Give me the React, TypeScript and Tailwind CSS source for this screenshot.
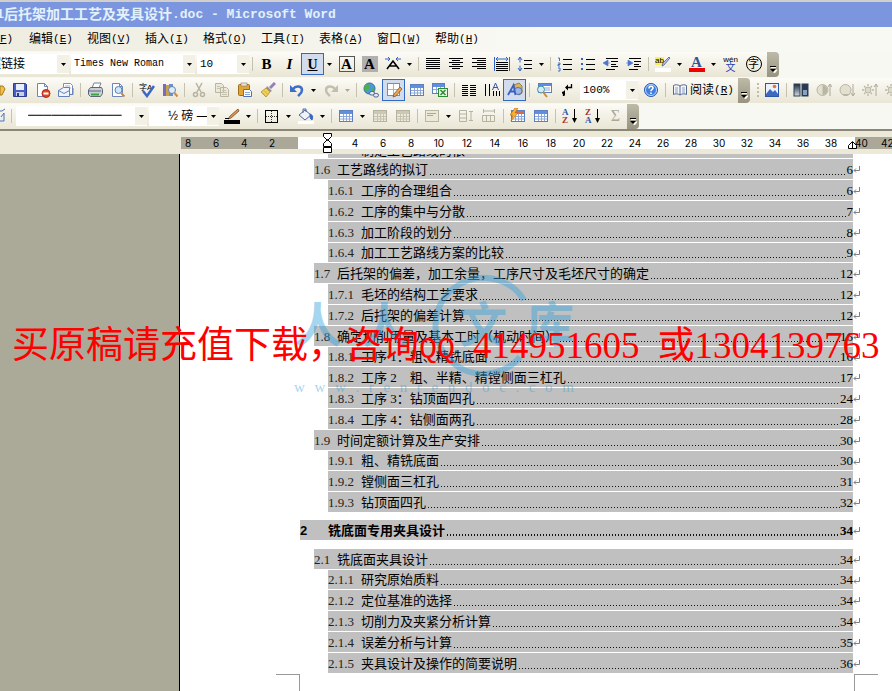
import type { ReactNode } from 'react';

const CJK = 'font-["Liberation_Sans","Noto_Sans_CJK_SC",sans-serif]';
const MONO = 'font-["Liberation_Mono","Noto_Sans_CJK_SC",monospace]';
const SERIF = 'font-["Liberation_Serif","Noto_Sans_CJK_SC",serif]';

function Svg({ children, w = 16 }: { children: ReactNode; w?: number }) {
  return (
    <svg width={w} height="16" viewBox={`0 0 ${w} 16`} fill="none" className="shrink-0" aria-hidden="true">
      {children}
    </svg>
  );
}

function Btn({ label, on, children }: { label: string; on?: boolean; children: ReactNode }) {
  return (
    <button
      type="button"
      aria-label={label}
      className={`flex h-[22px] w-[23px] shrink-0 items-center justify-center ${on ? 'border border-[#316ac5] bg-[#d3dcec]' : ''}`}
    >
      {children}
    </button>
  );
}

function Arrow({ dim }: { dim?: boolean }) {
  return (
    <button type="button" aria-label="更多选项" className="flex h-[22px] w-[11px] shrink-0 items-center justify-center">
      <svg width="5" height="3" viewBox="0 0 5 3" aria-hidden="true">
        <path d="M0 0h5L2.5 3z" fill={dim ? '#aca899' : '#000'} />
      </svg>
    </button>
  );
}

function Sep() {
  return (
    <span className="flex h-[22px] w-[6px] shrink-0 items-center justify-center">
      <span className="h-[14px] w-px bg-[#c5c2b0]" />
    </span>
  );
}

function Cap() {
  return (
    <button
      type="button"
      aria-label="工具栏选项"
      className="flex h-[25px] w-3 shrink-0 items-end justify-center rounded-r-sm bg-linear-to-b from-[#bdbaa9] to-[#98947f] pb-1"
    >
      <svg width="7" height="7" viewBox="0 0 7 7" aria-hidden="true">
        <path d="M1 1.5h5M2 4h5L4.5 7z" stroke="#fff" fill="#fff" />
        <path d="M0 .5h6" stroke="#000" />
        <path d="M0 3h6L3 6z" fill="#000" />
      </svg>
    </button>
  );
}

function Combo({ label, value, box, text }: { label: string; value: string; box: string; text: string }) {
  return (
    <div className={`flex h-[20px] shrink-0 items-center overflow-hidden bg-white ${box}`}>
      <select aria-label={label} className={`min-w-0 flex-1 appearance-none bg-white leading-4 text-black ${text}`}>
        <option>{value}</option>
      </select>
      <span className="flex h-[18px] w-[12px] items-center justify-center bg-[#f3f1e6]">
        <svg width="5" height="3" viewBox="0 0 5 3" aria-hidden="true">
          <path d="M0 0h5L2.5 3z" fill="#000" />
        </svg>
      </span>
    </div>
  );
}

function Bar({ children }: { children: ReactNode }) {
  return (
    <div className="flex h-[25px] shrink-0 items-center rounded-r-sm bg-linear-to-b from-[#fcfbf6] to-[#e9e6d5]">
      {children}
    </div>
  );
}

/* ---------- icons ---------- */

function Lines({ rows }: { rows: [number, number][] }) {
  return (
    <Svg>
      <path d={rows.map(([a, b], i) => `M${a} ${2.5 + i * 2}H${b}`).join('')} stroke="#000" />
    </Svg>
  );
}

function TableIcon({ dim, lightning }: { dim?: boolean; lightning?: boolean }) {
  const s = dim ? '#b5b2a0' : '#5b7fc0';
  return (
    <Svg>
      <rect x="1.5" y="2.5" width="13" height="11" fill={dim ? '#ece9d8' : '#fff'} stroke={s} />
      <rect x="2" y="3" width="12" height="3" fill={dim ? '#cbc8b6' : lightning ? '#d9694a' : '#5f8fe0'} />
      <path d="M2 8.5h12M2 11h12M5.5 6v7M8.5 6v7M11.5 6v7" stroke={dim ? '#c5c2b0' : '#8fa8d8'} />
      {lightning && <path d="M5 0L0 7h3l-2 6 7-8H5l3-5z" fill="#f5b62a" stroke="#c2611a" strokeWidth=".6" />}
    </Svg>
  );
}

function Page({ children }: { children?: ReactNode }) {
  return (
    <Svg>
      <path d="M2.5 1.5h7l3 3v10h-10z" fill="#fff" stroke="#6f87b8" />
      <path d="M9.5 1.5v3h3" stroke="#6f87b8" />
      {children}
    </Svg>
  );
}

const Save = (
  <Svg>
    <path d="M1.5 1.5h12l1 1v12h-13z" fill="#4a5fc4" stroke="#2c3c92" />
    <rect x="4" y="2" width="8" height="6" fill="#e8eefc" />
    <rect x="4" y="10" width="8" height="4" fill="#c8cfe6" />
    <rect x="5" y="11" width="2" height="3" fill="#2c3c92" />
  </Svg>
);
const Permission = (
  <Page>
    <circle cx="11" cy="11.5" r="4" fill="#e0442a" stroke="#b32a15" />
    <rect x="8.5" y="10.5" width="5" height="2" fill="#fff" />
  </Page>
);
const Mail = (
  <Svg>
    <path d="M5.5 5V1.5h7l2 2V12" fill="#fff" stroke="#7a8fc0" />
    <path d="M7 4h5M7 6h6" stroke="#9fb2dc" />
    <path d="M.5 8.5l5-3h6v9H.5z" fill="#eef3fc" stroke="#6580b8" />
    <path d="M.5 8.5l5.5 3 5.5-3" stroke="#6580b8" />
    <path d="M12 12.5h3V6" stroke="#6580b8" />
  </Svg>
);
const Print = (
  <Svg>
    <path d="M5 6l2-5h7l-2 5z" fill="#fff" stroke="#7a8290" />
    <path d="M1.5 8l2-2.5h11l1 2v4l-2 3h-10l-2-2z" fill="#c9cfd8" stroke="#5d6675" />
    <path d="M2 9h12" stroke="#5d6675" />
    <path d="M4 12.5h8" stroke="#39a83e" strokeWidth="2" />
  </Svg>
);
const Preview = (
  <Page>
    <circle cx="8.5" cy="8" r="3.5" fill="#cfe6fa" stroke="#5f7fae" />
    <path d="M11 11l3.5 3.5" stroke="#d8892f" strokeWidth="2" />
  </Page>
);
const Spell = (
  <Svg>
    <text x="0" y="8" fontSize="8" fill="#000" className={CJK}>字A</text>
    <path d="M4 9l4 5 7-10" stroke="#3b68c8" strokeWidth="2.5" />
  </Svg>
);
const Research = (
  <Svg>
    <rect x="1" y="2" width="3" height="12" fill="#7a6bc0" />
    <rect x="4" y="3" width="3" height="11" fill="#c9a24a" />
    <rect x="7" y="2" width="4" height="12" fill="#6b90cf" />
    <circle cx="10" cy="8" r="3.5" fill="#dcecfb" stroke="#6681ae" />
    <path d="M12.5 11l3 3.5" stroke="#d8892f" strokeWidth="2" />
  </Svg>
);
const Cut = (
  <Svg>
    <path d="M5 1l5 9M11 1L6 10" stroke="#b5b2a0" strokeWidth="1.5" />
    <circle cx="4.5" cy="12.5" r="2" stroke="#b5b2a0" strokeWidth="1.5" />
    <circle cx="11.5" cy="12.5" r="2" stroke="#b5b2a0" strokeWidth="1.5" />
  </Svg>
);
const Copy = (
  <Svg>
    <path d="M1.5 1.5h6l2 2v7h-8zM6.5 5.5h6l2 2v7h-8z" fill="#ece9d8" stroke="#b9b6a4" />
    <path d="M8 8.5h4M8 10.5h5M8 12.5h5M3 4.5h3M3 6.5h3" stroke="#c5c2b0" />
  </Svg>
);
const Paste = (
  <Svg>
    <rect x="1.5" y="2.5" width="11" height="11" rx="1" fill="#e3a535" stroke="#a06d1a" />
    <rect x="4" y="1" width="6" height="3" fill="#e8e4d4" stroke="#847c68" strokeWidth=".6" />
    <path d="M6.5 7.5h6l2 2v5h-8z" fill="#fff" stroke="#5572b0" />
    <path d="M8 10.5h5M8 12.5h5" stroke="#8ba4d6" />
  </Svg>
);
const Brush = (
  <Svg>
    <path d="M15 1l-5 5" stroke="#9a7fb8" strokeWidth="3" />
    <path d="M7 4l5 5-2 1-4-4z" fill="#8f8fa8" />
    <path d="M6 6l4 4-4 5-5-5z" fill="#f0d25a" stroke="#b08d22" strokeWidth=".8" />
    <path d="M2 10.5l3 3M4 8.5l4 4" stroke="#c9a230" strokeWidth=".8" />
  </Svg>
);
function Turn({ dim }: { dim?: boolean }) {
  return (
    <Svg>
      <g transform={dim ? 'translate(16 0) scale(-1 1)' : undefined}>
        <path d="M4 7c3-4 9-3 9 1 0 3-2 4-4 6" stroke={dim ? '#c2bfae' : '#3d6cc9'} strokeWidth="2.5" />
        <path d="M1 3v7h7z" fill={dim ? '#c2bfae' : '#3d6cc9'} />
      </g>
    </Svg>
  );
}
const Globe = (
  <Svg>
    <circle cx="6.5" cy="6.5" r="5.5" fill="#4a9bd8" stroke="#2b6a9c" />
    <path d="M2 3c4-2 6 1 4 4S2 9 1 6zM8 7c3-2 4 0 3 2l-3 2z" fill="#4fb04a" />
    <rect x="6.5" y="9.5" width="5" height="3.5" rx="1.7" fill="#e4e9f4" stroke="#52648c" />
    <rect x="10.5" y="11.5" width="5" height="3.5" rx="1.7" fill="#e4e9f4" stroke="#52648c" />
  </Svg>
);
const DrawTable = (
  <Svg>
    <rect x="1.5" y="1.5" width="12" height="12" fill="#fff" stroke="#6d8cc8" />
    <path d="M7.5 2v11M2 7.5h11" stroke="#9db4e0" />
    <path d="M14 5l-6 7-1 3 3-1 6-7z" fill="#e9a353" stroke="#8a5420" strokeWidth=".8" />
  </Svg>
);
const Excel = (
  <Svg>
    <rect x=".5" y="1.5" width="12" height="10" fill="#fff" stroke="#5b7fc0" />
    <rect x="1" y="2" width="11" height="3" fill="#5f8fe0" />
    <path d="M1 7.5h11M4.5 5v6M8.5 5v6" stroke="#8fa8d8" />
    <rect x="6.5" y="6.5" width="9" height="8" fill="#e8f6e4" stroke="#2d8a34" />
    <path d="M8.5 8l5 5M13.5 8l-5 5" stroke="#2d8a34" strokeWidth="1.5" />
  </Svg>
);
const Columns = (
  <Svg>
    <path d="M1 3.5h6M1 5.5h6M1 7.5h6M1 9.5h6M1 11.5h6M1 13.5h6M9 3.5h6M9 5.5h6M9 7.5h6M9 9.5h6M9 11.5h6M9 13.5h6" stroke="#000" />
  </Svg>
);
const Direction = (
  <Svg>
    <path d="M1.5 2v12M5.5 2v12M9.5 9v5M12.5 9v5M15.5 9v5" stroke="#000" />
    <path d="M8.5 8l3-7 3 7M9.5 5.5h4" stroke="#3059b5" />
  </Svg>
);
const Drawing = (
  <Svg>
    <path d="M7 3l5-2 3 3v7l-3 2-4-3z" fill="#d8b65c" stroke="#8c6c24" strokeWidth=".8" />
    <ellipse cx="11" cy="9" rx="4" ry="3.5" fill="#9eb8ea" stroke="#3f5fa8" strokeWidth=".8" />
    <path d="M1 13L6.500 3l2 10M3.500 9.500h5" stroke="#3d5fc0" strokeWidth="1.8" />
  </Svg>
);
const DocMap = (
  <Svg>
    <rect x="2.5" y="1.5" width="13" height="9" fill="#fff" stroke="#5b7fc0" />
    <rect x="3" y="2" width="12" height="2" fill="#5f8fe0" />
    <path d="M9 6h5M9 8h5" stroke="#8fa8d8" />
    <circle cx="5" cy="7.5" r="3.5" fill="#d3ecf4" stroke="#3a8ca0" />
    <path d="M7 10l4 5" stroke="#c98a3a" strokeWidth="2" />
  </Svg>
);
const Marks = (
  <Svg>
    <path d="M12.5 2v3.500H9M4.500 14v-3.500H3" stroke="#000" strokeWidth="1.300" />
    <path d="M9 2.500v6L6 5.500zM6 8v6l-3-3z" fill="#000" />
  </Svg>
);
const Help = (
  <Svg>
    <circle cx="8" cy="8" r="6.5" fill="#3f7fe0" stroke="#2458b0" />
    <circle cx="8" cy="8" r="5.5" stroke="#bcd6fb" />
    <path d="M6 6.5c0-3 4-3 4-.5C10 7.500 8 7.500 8 9.300M8 10.500v1.500" stroke="#fff" strokeWidth="1.6" />
  </Svg>
);
const Book = (
  <Svg>
    <path d="M8 4C6 2.500 3 2.500 1.500 3.500v9C3 11.500 6 11.500 8 13c2-1.500 5-1.500 6.500-.5v-9C13 2.500 10 2.500 8 4zv9" fill="#f4f7fd" stroke="#53668f" />
    <path d="M3 6h3M3 8h3M3 10h3M10 6h3M10 8h3M10 10h3" stroke="#8c9cc0" />
  </Svg>
);
const Picture = (
  <Svg>
    <rect x="1.5" y="1.5" width="13" height="13" fill="#eaf2fe" stroke="#2d55a8" />
    <path d="M2 12l4-5 3 3 2-2 3 4v2H2z" fill="#3f68c0" />
    <circle cx="10.5" cy="4.5" r="1.8" fill="#e8742a" />
  </Svg>
);
const ColorMode = (
  <Svg>
    <defs>
      <linearGradient id="fade" x1="0" y1="0" x2="0" y2="1">
        <stop offset="0" stopColor="#1c2a3a" />
        <stop offset="1" stopColor="#d5dde6" />
      </linearGradient>
    </defs>
    <rect x="1" y="2" width="6" height="12" fill="url(#fade)" stroke="#2d3f58" />
    <rect x="9" y="2" width="6" height="12" fill="#28394f" stroke="#2d3f58" />
    <rect x="10" y="8" width="4" height="5" fill="#8aa2c0" />
  </Svg>
);
function Contrast({ up }: { up?: boolean }) {
  return (
    <Svg>
      <circle cx="6.5" cy="8" r="5.5" fill="#e3e0cf" stroke="#b9b6a4" />
      <path d={up ? 'M6.5 3a5 5 0 010 10z' : 'M3 12a5 5 0 008 0z'} fill="#b9b6a4" />
      <path d={up ? 'M14 14V3M12 5l2-3 2 3' : 'M14 2v11M12 11l2 3 2-3'} stroke="#aca899" />
    </Svg>
  );
}
const Sun = (
  <Svg>
    <circle cx="6" cy="8" r="3" fill="#dcd9c8" stroke="#b9b6a4" />
    <path d="M6 2v2M6 12v2M0 8h2M10 8h2M2 4l1.5 1.5M8.5 10.5L10 12M10 4L8.5 5.5M3.5 10.5L2 12" stroke="#b9b6a4" strokeWidth="1.3" />
    <path d="M14 14V3M12 5l2-3 2 3" stroke="#aca899" />
  </Svg>
);

const BoxedA = <span className={`flex size-4 items-center justify-center border border-[#555] text-[15px] leading-4 font-bold ${SERIF}`}>A</span>;
const ShadedA = <span className={`flex size-4 items-center justify-center bg-[#b0b0b0] text-[15px] leading-4 font-bold ${SERIF}`}>A</span>;
const ScaleA = (
  <Svg>
    <path d="M2 13l6-8 6 8M5 10h6" stroke="#000" strokeWidth="1.6" />
    <path d="M0 3h5M11 3h5M3 1l2 2-2 2M13 1l-2 2 2 2" stroke="#2f62c4" />
  </Svg>
);
const Distribute = (
  <Svg>
    <path d="M.5 1v14M15.5 1v14M2 3h12M4 1L2 3l2 2M12 1l2 2-2 2" stroke="#2f62c4" />
    <path d="M2 6.5h12M2 8.5h12M2 10.5h12M2 12.5h12M2 14.5h12" stroke="#000" />
  </Svg>
);
const Spacing = (
  <Svg>
    <path d="M3 1.5v5M3 9.5v5M1 4l2-3 2 3M1 12l2 3 2-3" stroke="#2f62c4" />
    <path d="M7 4.5h8M7 8.5h8M7 12.5h8" stroke="#000" />
  </Svg>
);
const Numbered = (
  <Svg>
    <path d="M1 2h1.5v3M1 7h2v1.5H1V10h2M1 12h2v3H1" stroke="#2f62c4" strokeWidth=".9" />
    <path d="M6 3.5h9M6 8.5h9M6 13.5h9" stroke="#000" />
  </Svg>
);
const Bullets = (
  <Svg>
    <path d="M1 2h2v2H1zM1 7h2v2H1zM1 12h2v2H1z" fill="#2f62c4" />
    <path d="M6 3.5h9M6 8.5h9M6 13.5h9" stroke="#000" />
  </Svg>
);
function Indent({ out }: { out?: boolean }) {
  return (
    <Svg>
      <path d="M3 2.5h12M8 5.5h7M8 8.5h5M8 10.5h7M3 13.5h9" stroke="#000" strokeWidth="1.2" />
      <path d={out ? 'M5 4v6L0 7zM5 7h2' : 'M2 4v6l5-3zM0 7h2'} fill="#4a76d0" stroke="#4a76d0" strokeWidth=".6" />
    </Svg>
  );
}
const Highlight = (
  <Svg>
    <rect x="0" y="1" width="9" height="8" fill="#f6f25a" />
    <text x="0" y="7" fontSize="8" fill="#000" className={CJK}>ab</text>
    <path d="M15 2L9 9l-2 1 1-3 6-6z" fill="#b7c6e4" stroke="#4b5f8c" strokeWidth=".8" />
    <rect x="0" y="12" width="16" height="4" fill="#fff" />
  </Svg>
);
const FontColor = (
  <span className="flex w-4 flex-col items-center">
    <b className={`text-[15px] leading-3 text-[#34539c] ${SERIF}`}>A</b>
    <span className="h-1 w-4 bg-[#f00000]" />
  </span>
);
const Pinyin = (
  <span className="flex flex-col items-center">
    <span className={`text-[8px] leading-[7px] ${CJK}`}>wén</span>
    <span className={`text-[10px] leading-[10px] text-[#2a3fae] ${CJK}`}>文</span>
  </span>
);
const Enclosed = <span className={`flex size-4 items-center justify-center rounded-full border border-black text-[11px] leading-[14px] ${CJK}`}>字</span>;

const PenColor = (
  <Svg>
    <path d="M14 1l-8 7-2 3 3-1 8-7z" fill="#d9985a" stroke="#7c4a1c" strokeWidth=".8" />
    <path d="M1 10.5h4" stroke="#000" />
    <rect x="0" y="12" width="16" height="4" fill="#000" />
  </Svg>
);
const Border = (
  <Svg>
    <rect x="1.5" y="2.5" width="12" height="12" stroke="#000" />
    <path d="M7.5 3v11M2 8.5h11" stroke="#333" strokeDasharray="1 1" />
  </Svg>
);
const Fill = (
  <Svg>
    <path d="M1 7l6-5 6 5-6 5z" fill="#eef3fb" stroke="#4f6798" />
    <path d="M5 5V1h3v3" stroke="#4f6798" />
    <path d="M12 6c3 1 3 3 2 6-2-1-2-3-2-6z" fill="#3565c8" stroke="#3565c8" />
    <rect x="0" y="13" width="16" height="3" fill="#fff" />
  </Svg>
);
const AlignCell = (
  <Svg>
    <rect x="1.5" y="2.5" width="13" height="11" fill="#ece9d8" stroke="#b9b6a4" />
    <path d="M3 5.5h9M3 7.5h6" stroke="#aca899" />
  </Svg>
);
const DistRows = (
  <Svg>
    <path d="M1.5 2.5h7v11h-7zM2 6h6M2 10h6M11 3.5h4M11 12.5h4M13 4v8" stroke="#b5b2a0" />
  </Svg>
);
const DistCols = (
  <Svg>
    <path d="M1.5 7.5h12v6h-12zM5.5 8v5M9.5 8v5M2.5 1v4M13.5 1v4M3 3h10" stroke="#b5b2a0" />
  </Svg>
);
function Sort({ a, b }: { a: string; b: string }) {
  return (
    <Svg>
      <text x="0" y="7" fontSize="9" fontWeight="bold" fill={a === 'A' ? '#2d55a8' : '#a8332b'} className={SERIF}>{a}</text>
      <text x="0" y="15" fontSize="9" fontWeight="bold" fill={b === 'A' ? '#2d55a8' : '#a8332b'} className={SERIF}>{b}</text>
      <path d="M12.5 1v12" stroke="#000" />
      <path d="M10 10h5l-2.5 5z" fill="#000" />
    </Svg>
  );
}

/* ---------- data ---------- */

const menus: [string, string][] = [
  ['编辑', 'E'],
  ['视图', 'V'],
  ['插入', 'I'],
  ['格式', 'O'],
  ['工具', 'T'],
  ['表格', 'A'],
  ['窗口', 'W'],
  ['帮助', 'H'],
];

type Entry = { n: string; t: string; p: number };
const toc: Entry[] = [
  { n: '1.6', t: '工艺路线的拟订', p: 6 },
  { n: '1.6.1', t: '工序的合理组合', p: 6 },
  { n: '1.6.2', t: '工序的集中与分散', p: 7 },
  { n: '1.6.3', t: '加工阶段的划分', p: 8 },
  { n: '1.6.4', t: '加工工艺路线方案的比较', p: 9 },
  { n: '1.7', t: '后托架的偏差，加工余量，工序尺寸及毛坯尺寸的确定', p: 12 },
  { n: '1.7.1', t: '毛坯的结构工艺要求', p: 12 },
  { n: '1.7.2', t: '后托架的偏差计算', p: 12 },
  { n: '1.8', t: '确定切削用量及基本工时（机动时间）', p: 16 },
  { n: '1.8.1', t: '工序 1：粗、精铣底面', p: 16 },
  { n: '1.8.2', t: '工序 2　粗、半精、精镗侧面三杠孔', p: 17 },
  { n: '1.8.3', t: '工序 3：钻顶面四孔', p: 24 },
  { n: '1.8.4', t: '工序 4：钻侧面两孔', p: 28 },
  { n: '1.9', t: '时间定额计算及生产安排', p: 30 },
  { n: '1.9.1', t: '粗、精铣底面', p: 30 },
  { n: '1.9.2', t: '镗侧面三杠孔', p: 31 },
  { n: '1.9.3', t: '钻顶面四孔', p: 32 },
  { n: '2', t: '铣底面专用夹具设计', p: 34 },
  { n: '2.1', t: '铣底面夹具设计', p: 34 },
  { n: '2.1.1', t: '研究原始质料', p: 34 },
  { n: '2.1.2', t: '定位基准的选择', p: 34 },
  { n: '2.1.3', t: '切削力及夹紧分析计算', p: 34 },
  { n: '2.1.4', t: '误差分析与计算', p: 35 },
  { n: '2.1.5', t: '夹具设计及操作的简要说明', p: 36 },
];

function TocRow({ e, short }: { e: Entry; short: boolean }) {
  const level = e.n.split('.').length;
  const indent = ['', 'ml-[120px] mt-2 mb-[9px] font-bold', 'ml-[134px] mb-px', 'ml-[148px] mb-px'][level];
  const numWidth = ['', 'w-7', 'w-[23px]', 'w-[33px]'][level];
  return (
    <li className={`flex items-center ${indent}`}>
      <div className={`flex min-w-0 flex-1 items-center bg-[#c0c0c0] ${short ? 'h-[19px]' : 'h-[20px]'}`}>
        <span className={`shrink-0 ${level === 1 ? 'font-["Liberation_Sans",sans-serif]' : 'text-[#222]'} ${numWidth}`}>{e.n}</span>
        <span className="shrink-0 whitespace-pre">{e.t}</span>
        <span
          className={`mb-1 ml-0.5 min-w-0 flex-1 self-end bg-[repeating-linear-gradient(90deg,#111_0_1px,transparent_1px_3px)] ${level === 1 ? 'h-0.5' : 'h-px'}`}
        />
        <span className="shrink-0">{e.p}</span>
      </div>
      <svg width="8" height="8" viewBox="0 0 8 8" fill="none" className="shrink-0" aria-hidden="true">
        <path d="M6.5 1v4.500H1M3 3.500l-2 2 2 2" stroke="#808080" />
      </svg>
    </li>
  );
}

export default function App() {
  return (
    <div className="flex h-screen flex-col overflow-hidden bg-white text-black">
      <div className="h-0.5 shrink-0 bg-[#d0cfcb]" />
      <header className="flex h-[25px] shrink-0 items-center bg-[#7b96df] font-bold whitespace-pre text-[#e3f1fb]">
        <span className={`flex w-1 justify-end overflow-hidden text-[13px] ${MONO}`}>1</span>
        <span className={`text-[14px] ${CJK}`}>后托架加工工艺及夹具设计</span>
        <span className={`text-[13px] ${MONO}`}>.doc - Microsoft Word</span>
      </header>

      <nav className={`flex h-[24px] shrink-0 items-center bg-linear-to-r from-[#efede0] to-[#f9f9f4] to-60% text-[12px] ${CJK}`}>
        <button type="button" className="flex w-[29px] shrink-0 overflow-hidden">
          <span className={`text-[11px] ${MONO}`}><u>F</u>)</span>
        </button>
        {menus.map(([name, key]) => (
          <button key={key} type="button" className="flex w-[58px] shrink-0 items-center">
            {name}
            <span className={`text-[11px] ${MONO}`}>(<u>{key}</u>)</span>
          </button>
        ))}
      </nav>

      <div className={`shrink-0 border-b-2 border-[#8a8778] bg-[#f8f8f3] ${CJK}`}>
        <div className="flex h-[26px] items-center overflow-hidden">
          <Bar>
            <div className="-ml-[11px] flex">
              <Combo label="样式" value="超链接" box="w-[80px] mr-0.5" text="text-[12px]" />
            </div>
            <Combo label="字体" value="Times New Roman" box="w-[124px] mr-0.5 pl-[3px]" text={`text-[10px] ${MONO}`} />
            <Combo label="字号" value="10" box="w-[52px] pl-[3px]" text={`text-[11px] ${MONO}`} />
            <Sep />
            <Btn label="加粗"><b className={`text-[15px] ${SERIF}`}>B</b></Btn>
            <Btn label="倾斜"><b className={`text-[15px] italic ${SERIF}`}>I</b></Btn>
            <Btn label="下划线" on><b className={`text-[14px] underline ${SERIF}`}>U</b></Btn>
            <Arrow />
            <Btn label="字符边框">{BoxedA}</Btn>
            <Btn label="字符底纹">{ShadedA}</Btn>
            <Btn label="字符缩放">{ScaleA}</Btn>
            <Arrow />
            <Sep />
            <Btn label="两端对齐"><Lines rows={[[1, 15], [1, 15], [1, 15], [1, 15], [1, 15], [1, 15]]} /></Btn>
            <Btn label="居中"><Lines rows={[[1, 15], [4, 12], [1, 15], [4, 12], [1, 15], [4, 12]]} /></Btn>
            <Btn label="右对齐"><Lines rows={[[1, 15], [6, 15], [1, 15], [6, 15], [1, 15], [6, 15]]} /></Btn>
            <Btn label="分散对齐">{Distribute}</Btn>
            <Btn label="行距">{Spacing}</Btn>
            <Arrow />
            <Sep />
            <Btn label="编号">{Numbered}</Btn>
            <Btn label="项目符号">{Bullets}</Btn>
            <Btn label="减少缩进量"><Indent out /></Btn>
            <Btn label="增加缩进量"><Indent /></Btn>
            <Sep />
            <Btn label="突出显示">{Highlight}</Btn>
            <Arrow />
            <Btn label="字体颜色">{FontColor}</Btn>
            <Arrow />
            <Btn label="拼音指南">{Pinyin}</Btn>
            <Btn label="带圈字符">{Enclosed}</Btn>
            <span className="w-0.5" />
            <Cap />
          </Bar>
        </div>

        <div className="flex h-[26px] items-center overflow-hidden">
          <Bar>
            <button type="button" aria-label="打开" className="flex w-2 justify-start overflow-hidden">
              <Svg>
                <path d="M0 4h3l2 3-3 6H0z" fill="#f0c04a" stroke="#a87a1c" />
              </Svg>
            </button>
            <Btn label="保存">{Save}</Btn>
            <Btn label="权限">{Permission}</Btn>
            <Btn label="电子邮件">{Mail}</Btn>
            <Sep />
            <Btn label="打印">{Print}</Btn>
            <Btn label="打印预览">{Preview}</Btn>
            <Sep />
            <Btn label="拼写和语法">{Spell}</Btn>
            <Btn label="信息检索">{Research}</Btn>
            <Sep />
            <Btn label="剪切">{Cut}</Btn>
            <Btn label="复制">{Copy}</Btn>
            <Btn label="粘贴">{Paste}</Btn>
            <Btn label="格式刷">{Brush}</Btn>
            <Sep />
            <Btn label="撤消"><Turn /></Btn>
            <Arrow />
            <Btn label="恢复"><Turn dim /></Btn>
            <Arrow dim />
            <Sep />
            <Btn label="超链接">{Globe}</Btn>
            <Btn label="表格和边框" on>{DrawTable}</Btn>
            <Btn label="插入表格"><TableIcon /></Btn>
            <Btn label="插入工作表">{Excel}</Btn>
            <Sep />
            <Btn label="分栏">{Columns}</Btn>
            <Btn label="文字方向">{Direction}</Btn>
            <Btn label="绘图" on>{Drawing}</Btn>
            <Sep />
            <Btn label="文档结构图">{DocMap}</Btn>
            <Btn label="显示标记">{Marks}</Btn>
            <Combo label="显示比例" value="100%" box="w-[58px] ml-0.5 pl-[3px]" text={`text-[11px] ${MONO}`} />
            <span className="w-px" />
            <Btn label="帮助">{Help}</Btn>
            <Sep />
            <button type="button" className="flex w-[70px] shrink-0 items-center pl-1 text-[12px]">
              {Book}
              <span className="ml-0.5">阅读</span>
              <span className={`text-[11px] ${MONO}`}>(<u>R</u>)</span>
            </button>
            <Cap />
          </Bar>
          <Bar>
            <span className="flex w-[10px] flex-col items-end gap-0.5 pr-px">
              {[0, 1, 2, 3].map((i) => (
                <span key={i} className="size-0.5 bg-[#c0bda9]" />
              ))}
            </span>
            <Btn label="插入图片">{Picture}</Btn>
            <Sep />
            <Btn label="颜色">{ColorMode}</Btn>
            <Btn label="增加对比度"><Contrast up /></Btn>
            <Btn label="降低对比度"><Contrast /></Btn>
            <Btn label="增加亮度">{Sun}</Btn>
            <Btn label="降低亮度">{Sun}</Btn>
          </Bar>
        </div>

        <div className="flex h-[26px] items-center overflow-hidden">
          <Bar>
            <button type="button" aria-label="绘制表格" className="flex w-2 overflow-hidden">
              <Svg>
                <path d="M0 3h2l3-2M0 13h4V5L1 9" fill="#e6eefb" stroke="#5070b0" />
              </Svg>
            </button>
            <Sep />
            <Combo label="线型" value="────────────" box="w-[131px] mx-0.5 pl-[12px]" text={`text-[13px] ${MONO}`} />
            <Combo label="粗细" value="½ 磅 —" box="w-[70px] pl-[19px]" text="text-[12px]" />
            <span className="w-px" />
            <Btn label="边框颜色">{PenColor}</Btn>
            <Arrow />
            <Sep />
            <Btn label="外侧框线">{Border}</Btn>
            <Arrow />
            <Btn label="底纹颜色">{Fill}</Btn>
            <Arrow />
            <Sep />
            <Btn label="插入表格"><TableIcon /></Btn>
            <Arrow />
            <Btn label="合并单元格"><TableIcon dim /></Btn>
            <Btn label="拆分单元格"><TableIcon dim /></Btn>
            <Sep />
            <Btn label="单元格对齐">{AlignCell}</Btn>
            <Arrow />
            <Btn label="平均分布各行">{DistRows}</Btn>
            <Btn label="平均分布各列">{DistCols}</Btn>
            <Sep />
            <Btn label="自动套用格式"><TableIcon lightning /></Btn>
            <Btn label="虚框"><TableIcon /></Btn>
            <Sep />
            <Btn label="升序"><Sort a="A" b="Z" /></Btn>
            <Btn label="降序"><Sort a="Z" b="A" /></Btn>
            <Btn label="自动求和"><span className={`text-[16px] text-[#aca899] ${SERIF}`}>Σ</span></Btn>
            <Cap />
          </Bar>
        </div>
      </div>

      <div className="relative flex h-[23px] shrink-0 items-center bg-[#ece9d8] pl-[181px] font-[Inter,sans-serif] text-[10px] leading-3">
        <div className="flex h-3 w-[117px] shrink-0 bg-[#aca899] pl-1">
          {[8, 6, 4, 2].map((n) => (
            <span key={n} className="w-7 shrink-0">{n}</span>
          ))}
        </div>
        <div className="flex h-3 min-w-0 flex-1 overflow-hidden bg-white pl-[43px]">
          {Array.from({ length: 18 }, (_, i) => (
            <span key={i} className="w-7 shrink-0 text-center">{4 + i * 2}</span>
          ))}
        </div>
        <div className="flex h-3 w-[37px] shrink-0 overflow-hidden bg-[#aca899]">
          <span className="w-[26px] shrink-0">40</span>
          <span className="shrink-0">42</span>
        </div>
        <svg width="10" height="21" viewBox="0 0 10 21" className="absolute top-0.5 left-[323px]" aria-hidden="true">
          <path d="M.5.5h8v3l-4 4-4-4zM.5 13.500h8v-3l-4-4-4 4zM.5 14.500h8v5h-8z" fill="#fff" stroke="#000" />
        </svg>
        <svg width="10" height="8" viewBox="0 0 10 8" className="absolute right-[34px] bottom-[5px]" aria-hidden="true">
          <path d="M.5 7.500h8v-3l-4-4-4 4z" fill="#fff" stroke="#000" />
          <path d="M4.500 1v7" stroke="#000" />
        </svg>
      </div>

      <main className="relative flex min-h-0 flex-1 overflow-hidden">
        <div className="w-[180px] shrink-0 border-r border-black bg-[#aba998]" />
        <div className={`min-w-0 flex-1 pr-[31px] text-[13px] leading-[19px] ${SERIF}`}>
          <div className="mr-2 mb-px ml-[148px] flex h-1 items-end overflow-hidden bg-[#c0c0c0] pl-[33px]">
            <span className="leading-[14px]">制定工艺路线的依</span>
          </div>
          <ol>
            {toc.map((e, i) => (
              <TocRow key={e.n} e={e} short={i % 5 === 4} />
            ))}
          </ol>
          <div className="mt-px -mr-[17px] ml-[96px] flex justify-between">
            <span className="h-5 w-6 border-t border-r border-[#999]" />
            <span className="h-5 w-6 border-t border-l border-[#999]" />
          </div>
        </div>

        <div className={`pointer-events-none absolute top-[119px] left-[294px] w-[280px] text-[#3aa5dc] opacity-45 ${CJK}`}>
          <svg width="110" height="106" viewBox="0 0 110 106" fill="none" className="absolute top-0 left-[134px]" aria-hidden="true">
            <path d="M96 27A48 48 0 1 0 92 84" stroke="currentColor" strokeWidth="6" />
          </svg>
          <div className="flex h-[106px] items-center justify-between font-bold">
            <span className="text-[48px]">人</span>
            <span className="text-[48px]">人</span>
            <span className="ml-8 text-[48px]">文</span>
            <span className="text-[48px]">库</span>
          </div>
          <div className={`flex justify-between text-[15px] leading-4 ${SERIF}`}>
            {'www.renrendoc.com'.split('').map((c, i) => (
              <span key={i}>{c}</span>
            ))}
          </div>
        </div>

        <div className={`pointer-events-none absolute top-[167px] left-3 flex items-baseline text-[37px] leading-[50px] whitespace-nowrap text-[#f00] ${SERIF}`}>
          <span>买原稿请充值下载，咨询</span>
          <span className={`text-[30px] ${MONO}`}>QQ</span>
          <span className="ml-[18px]">414951605</span>
          <span className="ml-[18px]">或1304139763</span>
        </div>
      </main>
    </div>
  );
}
